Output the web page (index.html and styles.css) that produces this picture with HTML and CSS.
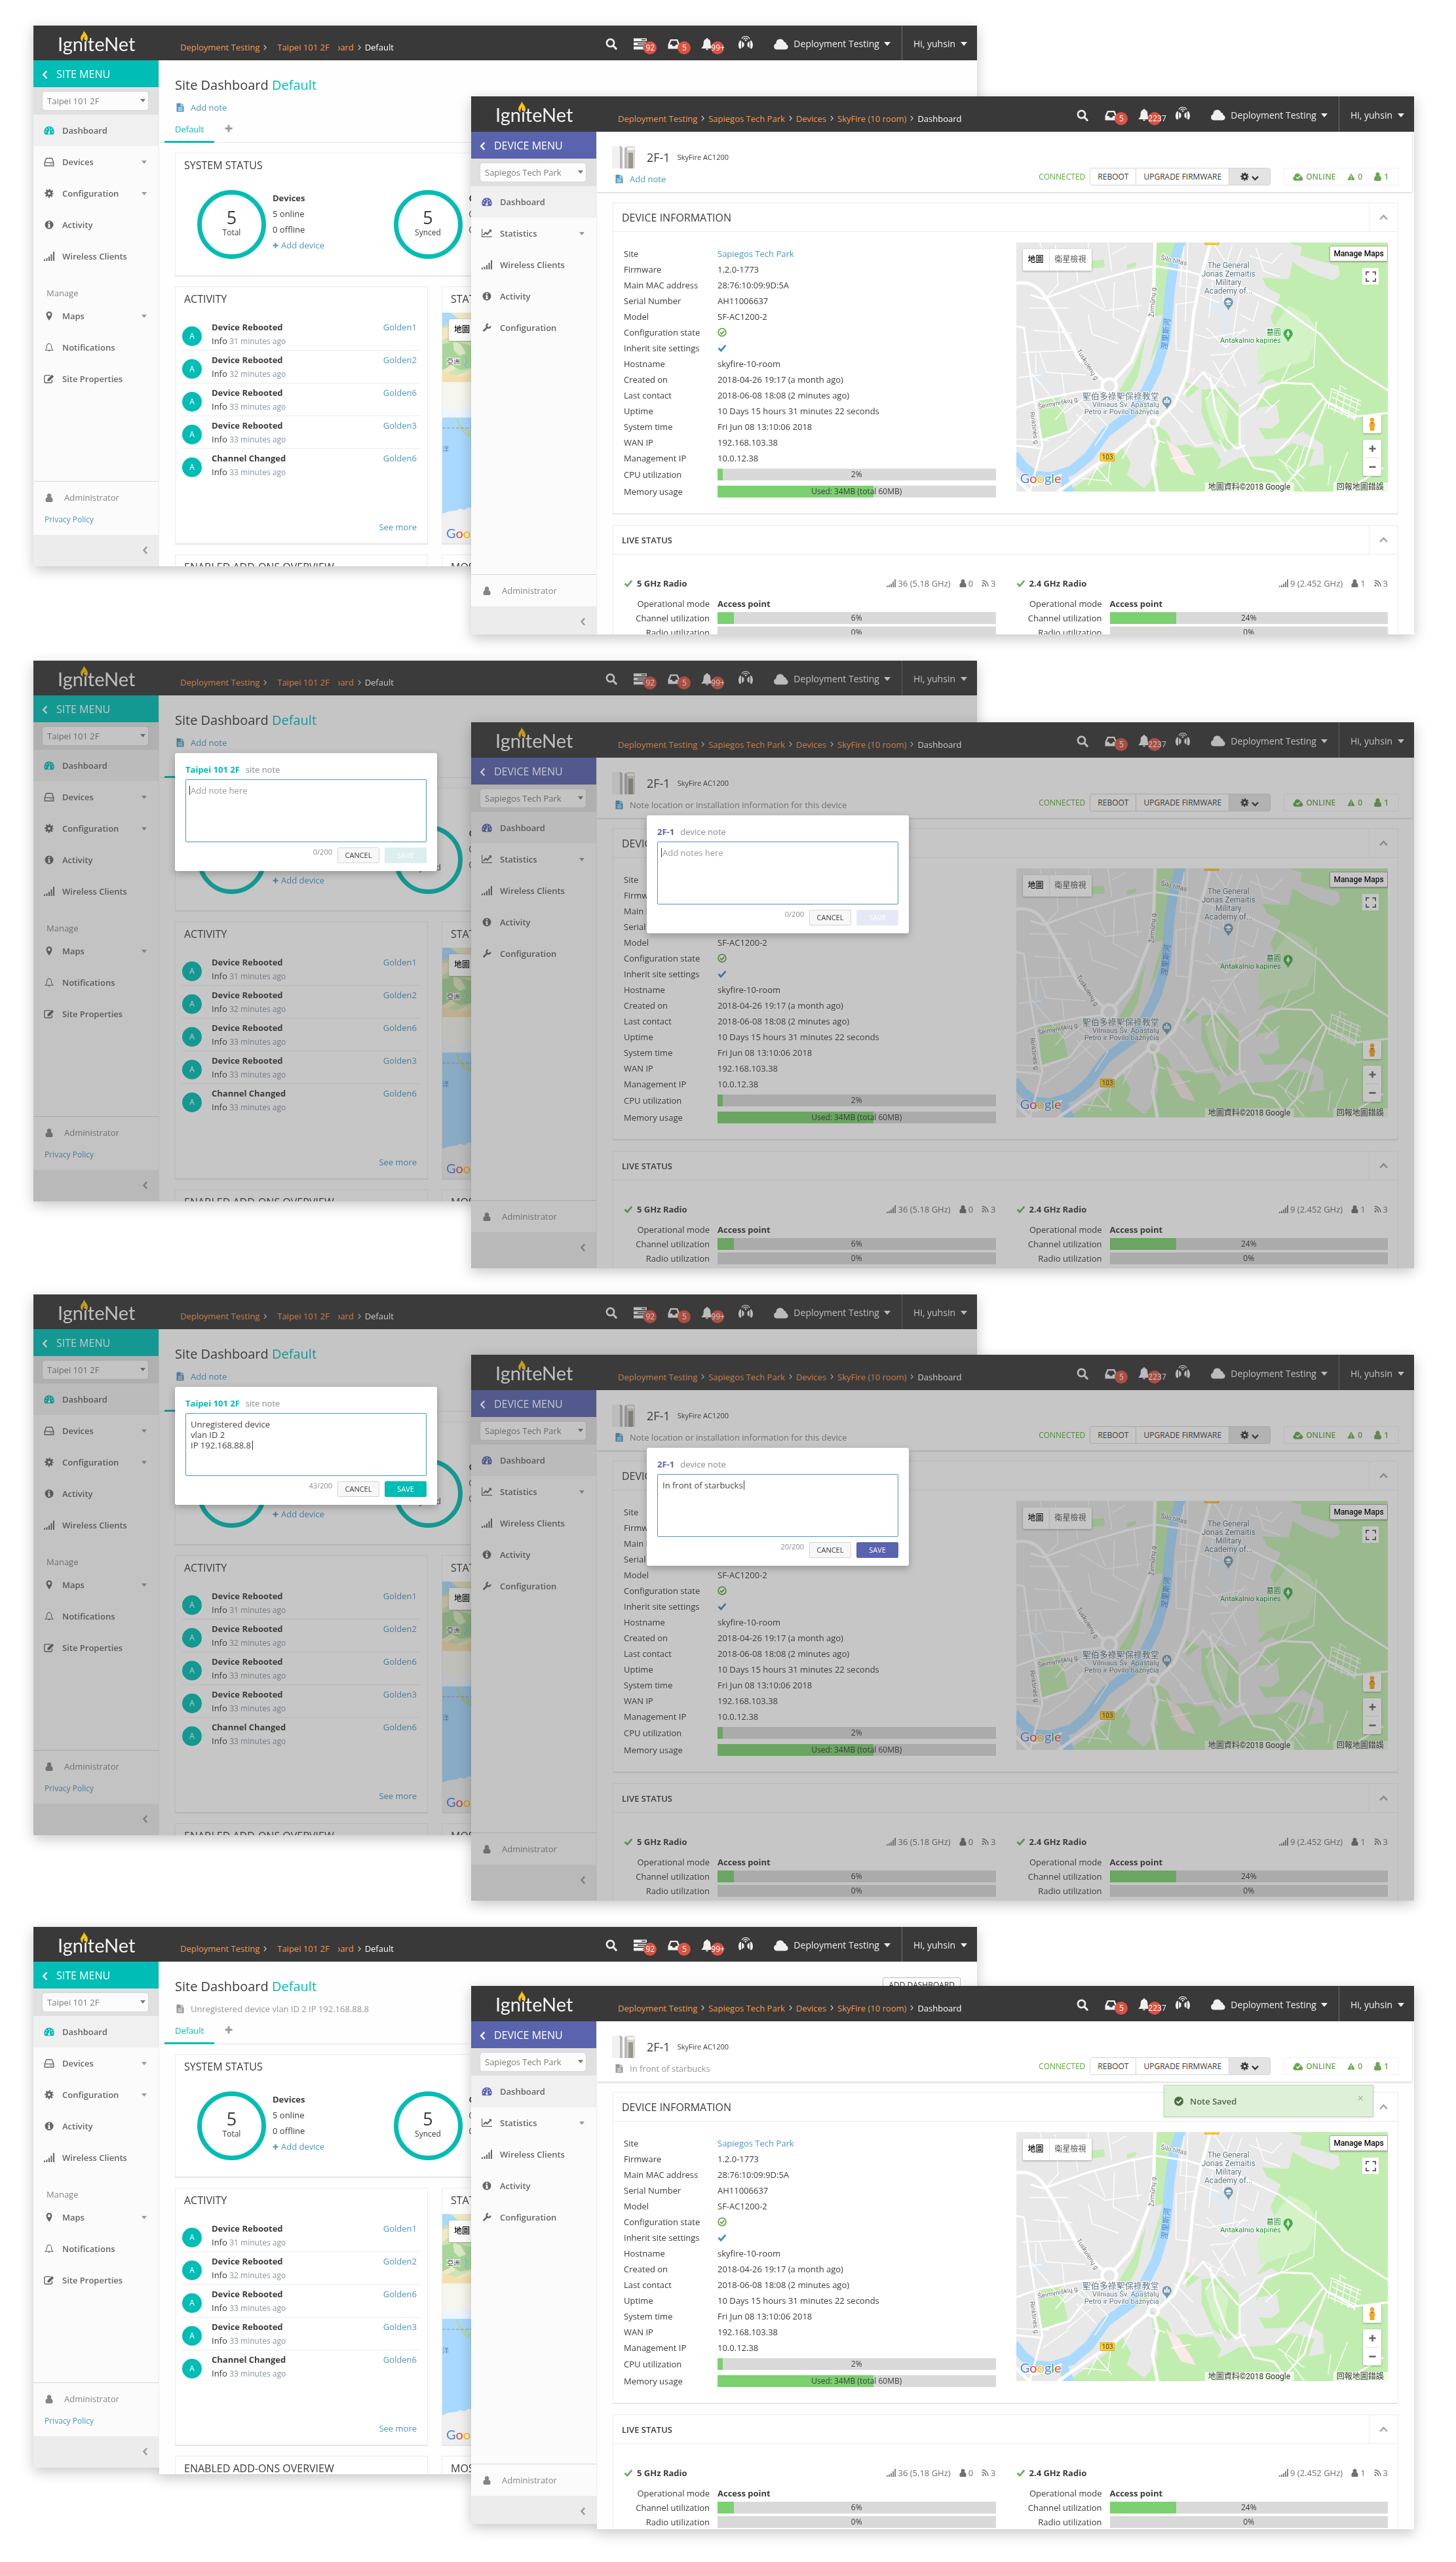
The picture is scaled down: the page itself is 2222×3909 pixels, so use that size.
FILE: index.html
```html
<!DOCTYPE html>
<html lang="en">
<head>
<meta charset="utf-8">
<meta name="viewport" content="width=device-width, initial-scale=1">
<title>IgniteNet – site and device notes</title>
<link rel="stylesheet" href="styles.css">
</head>
<body>

<svg class="sprite" aria-hidden="true">
  <symbol id="i-search" viewBox="0 0 18 18"><circle cx="7.5" cy="7.5" r="5.6" fill="none" stroke="currentColor" stroke-width="2.6"/><path d="M11.8 11.8l4.4 4.6" stroke="currentColor" stroke-width="3" stroke-linecap="round"/></symbol>
  <symbol id="i-tasks" viewBox="0 0 20 18"><path fill="currentColor" fill-rule="evenodd" d="M0 .5h20v4.500H0zM12 2v1.500h6.500V2zM0 6.700h20v4.500H0zM6 8.200v1.500h12.500V8.200zM0 13h20v4.500H0zM14 14.500v1.500h4.500v-1.500z"/></symbol>
  <symbol id="i-inbox" viewBox="0 0 19 16"><path fill="currentColor" fill-rule="evenodd" d="M4 1h11l3.500 8v6.500H.5V9zM5.500 3.200L3.200 9h3.300l1.200 2.600h3.600L12.500 9h3.300l-2.300-5.800z"/></symbol>
  <symbol id="i-bell" viewBox="0 0 18 19"><path fill="currentColor" d="M9 0c.8 0 1.300.6 1.300 1.400 2.700.6 4 3 4 5.600 0 4.500 1 6.300 3 8v1H.7v-1c2-1.700 3-3.500 3-8 0-2.600 1.300-5 4-5.600C7.700.6 8.200 0 9 0zM7 16.500h4a2 2 0 0 1-4 0z"/></symbol>
  <symbol id="i-antenna" viewBox="0 0 24 20"><g fill="currentColor"><path d="M4 6.500C.2 9.500.2 16.500 3 19.500l2-.7V7zM6.200 7.800l3.300 3v4.400l-3.300 3zM20 6.500c3.800 3 3.800 10 1 13l-2-.7V7zM17.800 7.800l-3.300 3v4.400l3.300 3z"/><circle cx="12" cy="6.500" r="1.200"/></g><path d="M8.800 5.300a3.500 3.500 0 0 1 6.400 0M6 4.300a6.600 6.600 0 0 1 12 0" fill="none" stroke="currentColor" stroke-width="1.300"/></symbol>
  <symbol id="i-cloud" viewBox="0 0 22 17"><path fill="currentColor" d="M5 16.500a4.600 4.600 0 0 1-1.600-9C3.200 3.600 5.800.6 9.600.6c3 0 5.200 1.700 5.900 4.300 2.200-.1 3.500 1.500 3.100 3.600 1.900.5 3 2 3 3.900 0 2.400-1.800 4.100-4.300 4.100z"/></symbol>
  <symbol id="i-cloudcheck" viewBox="0 0 22 17"><path fill="currentColor" fill-rule="evenodd" d="M5 16.500a4.600 4.600 0 0 1-1.600-9C3.200 3.600 5.800.6 9.600.6c3 0 5.200 1.700 5.900 4.300 2.200-.1 3.500 1.500 3.100 3.600 1.900.5 3 2 3 3.900 0 2.400-1.800 4.100-4.300 4.100zM6.400 9.600l3.700 3.700 6-6.200-1.500-1.400-4.500 4.700-2.200-2.200z"/></symbol>
  <symbol id="i-gauge" viewBox="0 0 16 14"><path fill="currentColor" d="M8 .8a7.700 7.700 0 0 0-7.700 7.700c0 1.800.5 3.300 1.300 4.700h12.800c.8-1.400 1.300-2.900 1.300-4.700A7.700 7.700 0 0 0 8 .8z"/><g fill="#f0f0f0"><circle cx="2.800" cy="9" r="1"/><circle cx="4.300" cy="5.200" r="1"/><circle cx="8" cy="3.300" r="1"/><circle cx="11.700" cy="5.200" r="1"/><circle cx="13.200" cy="9" r="1"/><path d="M8.600 4.800l.9.200-.7 4.300a1.700 1.700 0 1 1-1.300-.2z"/></g></symbol>
  <symbol id="i-disk" viewBox="0 0 14 12"><path d="M1 7l2.200-5.800h7.600L13 7v4.300H1zM1 7h12" fill="none" stroke="currentColor" stroke-width="1.200" stroke-linejoin="round"/><path d="M8 9h1.200M10.300 9h1.200" stroke="currentColor" stroke-width="1.200"/></symbol>
  <symbol id="i-gear" viewBox="0 0 16 16"><circle cx="8" cy="8" r="6.500" fill="none" stroke="currentColor" stroke-width="2.600" stroke-dasharray="2.700 2.405" stroke-dashoffset="1.350"/><circle cx="8" cy="8" r="4" fill="none" stroke="currentColor" stroke-width="3.400"/></symbol>
  <symbol id="i-info" viewBox="0 0 14 14"><circle cx="7" cy="7" r="6.500" fill="currentColor"/><path fill="#fbfbfb" d="M5.800 2.300h2.400v1.900H5.800zM5 5.500h3.200v4.300H9v1.500H5V9.800h.8V7H5z"/></symbol>
  <symbol id="i-signal" viewBox="0 0 16 14"><path fill="currentColor" d="M0 11.500h2V14H0zM3.500 10h2v4h-2zM7 7.500h2V14H7zM10.500 4h2v10h-2zM14 0h2v14h-2z"/></symbol>
  <symbol id="i-pin" viewBox="0 0 10 14"><path fill="currentColor" fill-rule="evenodd" d="M5 .3a4.500 4.500 0 0 1 4.500 4.500C9.500 7 7 11.500 5 13.900 3 11.500.5 7 .5 4.800A4.500 4.500 0 0 1 5 .3zM5 2.600a2.200 2.200 0 1 0 0 4.400 2.200 2.200 0 0 0 0-4.400z"/></symbol>
  <symbol id="i-bell-o" viewBox="0 0 16 16"><path d="M8 1.800c-2.600 0-3.900 2-3.900 4.500 0 3.400-.8 5-2.600 6.500h13c-1.800-1.500-2.600-3.100-2.600-6.500 0-2.500-1.300-4.500-3.900-4.500zM8 .3v1.500M6.500 13.200c.2 1.500 2.800 1.500 3 0" fill="none" stroke="currentColor" stroke-width="1.200"/></symbol>
  <symbol id="i-edit" viewBox="0 0 16 14"><path d="M10 1.600H3A2.200 2.200 0 0 0 .8 3.800v7A2.200 2.200 0 0 0 3 13h7.200a2.200 2.200 0 0 0 2.200-2.200V8.500" fill="none" stroke="currentColor" stroke-width="1.400"/><path fill="currentColor" d="M5.500 7.500L12.300.8l2.900 2.800-6.900 6.800H5.500z"/></symbol>
  <symbol id="i-user" viewBox="0 0 12 14"><path fill="currentColor" d="M6 0a3.400 3.400 0 0 1 2.600 5.700c2.300.6 3.400 2.500 3.400 5.600 0 1.600-.9 2.700-2.300 2.700H2.300C.9 14 0 12.900 0 11.300c0-3.100 1.100-5 3.400-5.600A3.400 3.400 0 0 1 6 0z"/></symbol>
  <symbol id="i-chart" viewBox="0 0 17 14"><path d="M.7 0v12.600H17" fill="none" stroke="currentColor" stroke-width="1.300"/><path d="M3 9.800l3.600-4 2.700 2.500 4.500-5.200" fill="none" stroke="currentColor" stroke-width="2.200"/><path fill="currentColor" d="M11.300 1H16v4.800z"/></symbol>
  <symbol id="i-wrench" viewBox="0 0 16 16"><path d="M2.800 13.200L9 7" stroke="currentColor" stroke-width="3.200" stroke-linecap="round"/><path d="M14.300 5.200a3.500 3.500 0 1 1-3.900-3.700" fill="none" stroke="currentColor" stroke-width="2.600"/></symbol>
  <symbol id="i-file" viewBox="0 0 12 14"><path fill="currentColor" fill-rule="evenodd" d="M.5.5h6.300v4.300h4.700v8.700H.5zM2.600 6.600v1h6.800v-1zM2.600 8.700v1h6.800v-1zM2.600 10.800v1h6.800v-1z"/><path fill="currentColor" d="M7.900.5l3.600 3.300H7.900z"/></symbol>
  <symbol id="i-check" viewBox="0 0 14 12"><path d="M1.500 6.200l3.800 3.900 7-8.300" fill="none" stroke="currentColor" stroke-width="2.800"/></symbol>
  <symbol id="i-check-o" viewBox="0 0 14 14"><circle cx="7" cy="7" r="5.900" fill="none" stroke="currentColor" stroke-width="1.700"/><path d="M4 6.800l2.400 2.500 3.900-4.500" fill="none" stroke="currentColor" stroke-width="1.900"/></symbol>
  <symbol id="i-check-disc" viewBox="0 0 14 14"><circle cx="7" cy="7" r="7" fill="currentColor"/><path d="M3.500 7l2.700 2.700 4.500-5" fill="none" stroke="#dff0d8" stroke-width="2"/></symbol>
  <symbol id="i-rss" viewBox="0 0 12 12"><circle cx="2.200" cy="9.800" r="1.500" fill="currentColor"/><path d="M.8 4.800a6.400 6.400 0 0 1 6.400 6.400M.8 1a10.200 10.200 0 0 1 10.200 10.200" fill="none" stroke="currentColor" stroke-width="1.600"/></symbol>
  <symbol id="i-warn" viewBox="0 0 14 13"><path fill="currentColor" fill-rule="evenodd" d="M7 .3L13.800 12.700H.2zM6.200 4.500l.3 4.200h1l.3-4.200zM6.200 9.600v1.500h1.600V9.600z"/></symbol>
  <symbol id="i-left" viewBox="0 0 9 14"><path d="M7.300 1.500L2.300 7l5 5.500" fill="none" stroke="currentColor" stroke-width="2.600"/></symbol>
  <symbol id="i-up" viewBox="0 0 13 9"><path d="M1.200 7.600L6.500 2l5.300 5.600" fill="none" stroke="currentColor" stroke-width="2.400"/></symbol>
  <symbol id="i-down" viewBox="0 0 11 8"><path d="M1 1.300l4.500 4.700L10 1.300" fill="none" stroke="currentColor" stroke-width="2.400"/></symbol>
  <symbol id="i-sep" viewBox="0 0 5 9"><path d="M.8.800l3.400 3.700L.8 8.200" fill="none" stroke="#c9c9c9" stroke-width="1.200"/></symbol>
  <symbol id="i-plus" viewBox="0 0 12 12"><path d="M6 .5v11M.5 6h11" stroke="currentColor" stroke-width="2.800"/></symbol>
  <symbol id="i-flame" viewBox="0 0 14 22"><path fill="#fdc500" fill-rule="evenodd" d="M6.500 0c.4 4 6.500 7.500 6.500 13.500 0 3.300-1.700 5.600-3.600 6.500.8-2.300.6-4.300-.6-6-.7-1-1.500-1.800-1.700-3.200-1.600 2.200-3.400 4.600-2.400 8.200C2.400 18 1 16 1 13.200 1 8.500 6.500 6 6.500 0z"/></symbol>
</svg>

<main class="board" id="board"></main>

<template id="site-window">
  <article class="window site">
    <header class="topbar">
      <a class="logo" href="#">IgniteNet<svg class="flame"><use href="#i-flame"/></svg></a>
      <nav class="crumbs" aria-label="Breadcrumb">
        <a href="#">Deployment Testing</a><svg><use href="#i-sep"/></svg>
        <a class="crumb-site" href="#">Taipei 101 2F</a>
        <a class="crumb-cut" href="#"><span>Dashboard</span></a><svg><use href="#i-sep"/></svg>
        <span class="here">Default</span>
      </nav>
      <div class="tools">
        <button class="tool find" aria-label="Search"><svg><use href="#i-search"/></svg></button>
        <button class="tool tasks" aria-label="Tasks"><svg><use href="#i-tasks"/></svg><b class="badge">92</b></button>
        <button class="tool inbox" aria-label="Inbox"><svg><use href="#i-inbox"/></svg><b class="badge">5</b></button>
        <button class="tool bell" aria-label="Alerts"><svg><use href="#i-bell"/></svg><b class="badge long">99+</b></button>
        <button class="tool antenna" aria-label="Wireless"><svg><use href="#i-antenna"/></svg></button>
        <button class="tool cloud"><svg><use href="#i-cloud"/></svg>Deployment Testing<i class="caret"></i></button>
        <button class="tool me">Hi, yuhsin<i class="caret"></i></button>
      </div>
    </header>

    <aside class="side">
      <a class="menu-title" href="#"><svg><use href="#i-left"/></svg>SITE MENU</a>
      <div class="picker"><select aria-label="Site"><option>Taipei 101 2F</option></select><i class="caret"></i></div>
      <nav class="menu" aria-label="Site menu">
        <a class="on" href="#"><svg><use href="#i-gauge"/></svg>Dashboard</a>
        <a href="#"><svg><use href="#i-disk"/></svg>Devices<i class="caret"></i></a>
        <a href="#"><svg><use href="#i-gear"/></svg>Configuration<i class="caret"></i></a>
        <a href="#"><svg><use href="#i-info"/></svg>Activity</a>
        <a href="#"><svg><use href="#i-signal"/></svg>Wireless Clients</a>
        <h2>Manage</h2>
        <a href="#"><svg><use href="#i-pin"/></svg>Maps<i class="caret"></i></a>
        <a href="#"><svg><use href="#i-bell-o"/></svg>Notifications</a>
        <a href="#"><svg><use href="#i-edit"/></svg>Site Properties</a>
      </nav>
      <div class="account">
        <a class="admin" href="#"><svg><use href="#i-user"/></svg>Administrator</a>
        <a class="privacy" href="#">Privacy Policy</a>
      </div>
      <button class="fold" aria-label="Collapse menu"><svg><use href="#i-left"/></svg></button>
    </aside>

    <div class="content">
      <div class="head">
        <div class="headline"><h1>Site Dashboard <em>Default</em></h1></div>
        <a class="note" href="#"><svg><use href="#i-file"/></svg><span data-slot="siteNote"></span></a>
        <div class="tabs"><a class="on" href="#">Default</a><button aria-label="Add tab"><svg><use href="#i-plus"/></svg></button></div>
      </div>
      <section class="card status">
        <h2>SYSTEM STATUS</h2>
        <div class="rings">
          <div class="ringbox">
            <div class="ring"><b>5</b>Total</div>
            <div class="lines"><strong>Devices</strong><span>5 online</span><span>0 offline</span><a href="#"><svg><use href="#i-plus"/></svg>Add device</a></div>
          </div>
          <div class="ringbox">
            <div class="ring"><b>5</b>Synced</div>
            <div class="lines"><strong>Configuration</strong><span>0</span><span>0</span></div>
          </div>
        </div>
      </section>
      <div class="cards">
        <section class="card activity">
          <h2>ACTIVITY</h2>
          <ul>
            <li><i>A</i><div><strong>Device Rebooted</strong><span>Info <small>31 minutes ago</small></span></div><a href="#">Golden1</a></li>
            <li><i>A</i><div><strong>Device Rebooted</strong><span>Info <small>32 minutes ago</small></span></div><a href="#">Golden2</a></li>
            <li><i>A</i><div><strong>Device Rebooted</strong><span>Info <small>33 minutes ago</small></span></div><a href="#">Golden6</a></li>
            <li><i>A</i><div><strong>Device Rebooted</strong><span>Info <small>33 minutes ago</small></span></div><a href="#">Golden3</a></li>
            <li><i>A</i><div><strong>Channel Changed</strong><span>Info <small>33 minutes ago</small></span></div><a href="#">Golden6</a></li>
          </ul>
          <a class="more" href="#">See more</a>
        </section>
        <section class="card wide">
          <h2>STATUS</h2>
          <div class="worldmap">
            <svg width="100%" height="352" preserveAspectRatio="xMinYMin">
              <path fill="#a9d9fe" d="M0 0h2000v352H0z"/>
              <path fill="#cfe3b4" d="M0 22l10-8 12-6 14-6h1964v98H0z"/>
              <path fill="#efe9c4" d="M12 0h34v10L24 9zM0 24l10-2 6 12-16 8zM0 60l14 10 6 16-20 10zM0 94l18 4 26-12v22H0z"/>
              <path fill="#a8d59a" d="M0 48l20-4 24 6v34l-16 4-14-8-14 8z"/>
              <path fill="#dbe9c2" d="M16 42l12 6 8 14-10 4-8-8z"/>
              <path fill="#f3dfb0" d="M0 90l14 4 12 4 18-4v12H0z"/>
              <path fill="#f6f6ee" d="M0 106h2000v54H0z"/>
              <path fill="#eef5fc" d="M0 140l10 8 14 2 12-10 8 6v14H0z"/>
              <path d="M22 162l4 10 8 12 12 6M28 176l10 4 8 8" fill="none" stroke="#b4d9a4" stroke-width="3"/>
              <path d="M0 176h2000" stroke="#a98ea8" stroke-width="1" stroke-dasharray="5 2"/>
              <path fill="#f0f0f0" d="M0 307l10-4 12-1 4-3 8 2 6-4 10 2 1950 3v52H0z"/>
              <path d="M34 66l4 8-4 6 4 4" fill="none" stroke="#6fb5e8"/>
              <g font-family="Noto Sans CJK TC, sans-serif" font-size="10"><text x="7" y="78" fill="#333" stroke="#fff" stroke-width="2" paint-order="stroke">亞洲</text><text x="0" y="212" fill="#4b87d2">洋</text></g>
              <text class="google" x="6" y="344"><tspan fill="#4285f4">G</tspan><tspan fill="#ea4335">o</tspan><tspan fill="#fbbc05">o</tspan><tspan fill="#4285f4">g</tspan><tspan fill="#34a853">l</tspan><tspan fill="#ea4335">e</tspan></text>
            </svg>
            <div class="maptype"><button class="on">地圖</button></div>
          </div>
        </section>
        <section class="card"><h2>ENABLED ADD-ONS OVERVIEW</h2></section>
        <section class="card wide"><h2>MOST</h2></section>
      </div>
    </div>
  </article>
</template>

<template id="device-window">
  <article class="window device">
    <header class="topbar">
      <a class="logo" href="#">IgniteNet<svg class="flame"><use href="#i-flame"/></svg></a>
      <nav class="crumbs" aria-label="Breadcrumb">
        <a href="#">Deployment Testing</a><svg><use href="#i-sep"/></svg>
        <a href="#">Sapiegos Tech Park</a><svg><use href="#i-sep"/></svg>
        <a href="#">Devices</a><svg><use href="#i-sep"/></svg>
        <a href="#">SkyFire (10 room)</a><svg><use href="#i-sep"/></svg>
        <span class="here">Dashboard</span>
      </nav>
      <div class="tools">
        <button class="tool find" aria-label="Search"><svg><use href="#i-search"/></svg></button>
        <button class="tool inbox" aria-label="Inbox"><svg><use href="#i-inbox"/></svg><b class="badge">5</b></button>
        <button class="tool bell" aria-label="Alerts"><svg><use href="#i-bell"/></svg><b class="badge long">2237</b></button>
        <button class="tool antenna" aria-label="Wireless"><svg><use href="#i-antenna"/></svg></button>
        <button class="tool cloud"><svg><use href="#i-cloud"/></svg>Deployment Testing<i class="caret"></i></button>
        <button class="tool me">Hi, yuhsin<i class="caret"></i></button>
      </div>
    </header>

    <aside class="side">
      <a class="menu-title" href="#"><svg><use href="#i-left"/></svg>DEVICE MENU</a>
      <div class="picker"><select aria-label="Site"><option>Sapiegos Tech Park</option></select><i class="caret"></i></div>
      <nav class="menu" aria-label="Device menu">
        <a class="on" href="#"><svg><use href="#i-gauge"/></svg>Dashboard</a>
        <a href="#"><svg><use href="#i-chart"/></svg>Statistics<i class="caret"></i></a>
        <a href="#"><svg><use href="#i-signal"/></svg>Wireless Clients</a>
        <a href="#"><svg><use href="#i-info"/></svg>Activity</a>
        <a href="#"><svg><use href="#i-wrench"/></svg>Configuration</a>
      </nav>
      <div class="account">
        <a class="admin" href="#"><svg><use href="#i-user"/></svg>Administrator</a>
      </div>
      <button class="fold" aria-label="Collapse menu"><svg><use href="#i-left"/></svg></button>
    </aside>

    <div class="content">
      <div class="head">
        <div class="who">
          <div class="headline">
            <svg class="product" viewBox="0 0 35 34"><path fill="#f1f1f1" d="M0 3q0-3 4-3h8q4 0 4 4v30H0z"/><path fill="#b9b9b9" d="M11 0h1q4 0 4 4v30h-4V4q0-3-1-4zM19 4q0-3 4-3h2v33h-6z"/><path fill="#d8d5d0" d="M23 1q0-1 2-1h7q3 0 3 4v30H23z"/><path fill="#9a9790" d="M25 10h7v24h-7z"/><path fill="#f4f4f4" d="M23 2h11v4H23z"/></svg>
            <h1>2F-1</h1><small>SkyFire AC1200</small>
          </div>
          <a class="note" href="#"><svg><use href="#i-file"/></svg><span data-slot="deviceNote"></span></a>
        </div>
        <div class="actions">
          <span class="connected">CONNECTED</span>
          <div class="group"><button>REBOOT</button><button>UPGRADE FIRMWARE</button><button class="cog" aria-label="More actions"><svg><use href="#i-gear"/></svg><svg class="down"><use href="#i-down"/></svg></button></div>
          <div class="health"><span class="online"><svg><use href="#i-cloudcheck"/></svg>ONLINE</span><span><svg class="s-warn"><use href="#i-warn"/></svg>0</span><span><svg class="s-user"><use href="#i-user"/></svg>1</span></div>
        </div>
      </div>

      <section class="card panel">
        <header><h2>DEVICE INFORMATION</h2><button aria-label="Collapse"><svg><use href="#i-up"/></svg></button></header>
        <div class="halves info">
          <table>
            <tr><th scope="row">Site</th><td><a href="#">Sapiegos Tech Park</a></td></tr>
            <tr><th scope="row">Firmware</th><td>1.2.0-1773</td></tr>
            <tr><th scope="row">Main MAC address</th><td>28:76:10:09:9D:5A</td></tr>
            <tr><th scope="row">Serial Number</th><td>AH11006637</td></tr>
            <tr><th scope="row">Model</th><td>SF-AC1200-2</td></tr>
            <tr><th scope="row">Configuration state</th><td><svg class="ok"><use href="#i-check-o"/></svg></td></tr>
            <tr><th scope="row">Inherit site settings</th><td><svg class="yes"><use href="#i-check"/></svg></td></tr>
            <tr><th scope="row">Hostname</th><td>skyfire-10-room</td></tr>
            <tr><th scope="row">Created on</th><td>2018-04-26 19:17 (a month ago)</td></tr>
            <tr><th scope="row">Last contact</th><td>2018-06-08 18:08 (2 minutes ago)</td></tr>
            <tr><th scope="row">Uptime</th><td>10 Days 15 hours 31 minutes 22 seconds</td></tr>
            <tr><th scope="row">System time</th><td>Fri Jun 08 13:10:06 2018</td></tr>
            <tr><th scope="row">WAN IP</th><td>192.168.103.38</td></tr>
            <tr><th scope="row">Management IP</th><td>10.0.12.38</td></tr>
            <tr class="tall"><th scope="row">CPU utilization</th><td><div class="bar"><i style="width:2%"></i><span>2%</span></div></td></tr>
            <tr class="tall"><th scope="row">Memory usage</th><td><div class="bar"><i style="width:56%"></i><span>Used: 34MB (total 60MB)</span></div></td></tr>
          </table>
          <div class="citymap">
            <svg width="100%" height="380" viewBox="0 0 568 380" preserveAspectRatio="xMidYMid slice">
              <path fill="#e8e8e8" d="M0 0h568v380H0z"/>
              <g fill="#c2edb0">
                <path d="M464 0h104v380H80l60-44 22-23 13 24-6 18 26 20 10-11 9-30-9-62 26 18 8 20 22-2 14 6 26-2 12 20-6 14 34-18 52-3 28-19 34 10-9 26 24-4-2-30-30-20-20 10-38 2-14-24 2-60 24-30 36-20-28-22-12-30 16-34-22-12-6-14 40 2 6-26 26 16 36 12 10-8-2-14-44-12-14-4 2-14-16-4-12-12 26-2 30-2 12-10z"/>
                <path d="M213 0h36l-14 36-6 74-14 50-32 66-28 4 24-40 28-70 6-60zM283 225l30-4 26 26 2 56-16 14-25-16-17-40zM35 241l33-5 11 52-42 13zM114 28l20-2 1 12-21 2zM169 34l14-4v6l-14 5zM258 212l22 10-20 16zM174 256l30-14-4 14-20 12z"/>
              </g>
              <g fill="#d3f2c6"><path d="M416 96l28 14 12 18-2 30-10 22-40 12-32 10-4-36 10-16 20-28zM288 236l22-2 14 20-8 50-16-20-10-34z"/></g>
              <g fill="#e8e8e8"><path d="M366 218l24-10 14 8-22 10-16 26 32-4 4 26-12 10-28-2-2-12 10-18-16 4zM204 114l20-4-10 34-16 60-28 60-8-14 24-46zM172 312l30 4 12-10 2 34-22 34-8-12 4-22-12 8z"/></g>
              <path fill="#fbe9e9" d="M228 300l20 14 20 30 6 12-22-6-10-16zM266 192l8-2-4 16z"/>
              <path fill="#e3eaef" d="M294 86l36 4-4 60-10 20-4-60-20-10zM20 200l22-2 2 18-22 2z"/>
              <path d="M252-4l-11 34-7 46-3 40-3 30-14 48-18 36-21 32-38 28-26 36-26 22-32 10-24-2-18-14-14-18M68 352l14 30" fill="none" stroke="#aadaff" stroke-width="15" stroke-linejoin="round"/>
              <g fill="none" stroke="#fff" stroke-width="1.400">
                <path d="M36 0l10 30 20 10M60 4l4 60-20 22M90 20l4 40M110 0v24M140 0l6 44M168 6l-22 12M180 44l6 60M20 100h60M26 134l60 4M10 168l80-4M64 118l4 48M96 80l40 24 56-8M110 110l6 30 40 14M120 60l16 40M150 60l-2 54 40 22M80 138l16 36M36 168l10 30 60 4M70 200l4 36M24 200l50 60 40-30M60 270l26-32 30 28M78 300l36-30M40 330l40-28M100 240l40 40-20 30M92 262l30 30M0 300l50 2M4 206l34-4M30 170v30M256 6l-6 60 30 4M262 0l-4 120M276 90l-32 4v70l20 2M300 0l20 30-4 60M330 4l-20 60M320 40l22 10M345 8l-22 60M356 20l34 12 16-16M366 8l12 36 24 8M300 60l-6 56M280 80l30 12M340 80l-10 70M370 90l-8 30-20-10M272 140l22 6 60-12M290 130l30 30 30-30M296 172l30-2 30-20M310 200l30-40M300 180l24 40M284 196l50 26M330 170l20 50M290 240l26-40M240 230l30 30M226 250l36 40M250 280l24 30 26-4M236 330l30-6M178 300l-16 30M130 330l-20 40M120 340l26 30M100 360l40 4 4-30M210 300l18 6M310 300l10 20M380 260l22-20M440 310l-14 46M400 330l40 30M480 340l-4 30M506 320l-20 50M340 250l30-20 20 20"/>
                <path d="M480 222l46 20M484 228l42 20M482 236l42 20M478 244l42 20M478 252l40 18M482 222l-6 32M492 226l-6 34M502 230l-6 34M512 234l-6 34M522 238l-6 34"/>
                <path d="M504 224l-10-6v10M440 380l-30-40 20-30M458 120l-4 70-48 24M404 214l14-30"/>
              </g>
              <g fill="none" stroke="#fff" stroke-width="3" stroke-linejoin="round">
                <path d="M22 80l20 6 60-22 70-20 40-8 50 8M0 252l34-12 60-12 40-4M0 128l12 2 8 60 10 60 10 60-12 44-8 30M0 310l40 4M38 302l44-14 20-26M255 232l30-34 40 50 14 16M296 205l8 50 18 46 14 14 14-6M341 266v40l22 38 30 6 20 26M341 266l26-20 14-24 24-8 46 2 24 28 40 22 53-6M468 238l-52 64-20 20M474 242l-20 50-14 46-36 40M262 44l80 24 60 28 30 22 32 22 36 42 36 24 32 20M0 362l30 8 40-16M500 380l60-36"/>
              </g>
              <g fill="none" stroke="#fff" stroke-width="5">
                <path d="M0 62c30-4 40 12 56 40l40 76 36 32M212-2l-2 66-6 46-28 72-26 28M297-2l-16 60-10 50-6 60-4 34-20 46-24 22M200 278l-52 44-84 58M210 280l6 24-8 36 8 42M0 360l24 24"/>
                <circle cx="142" cy="219" r="11"/><circle cx="209" cy="273" r="8"/>
              </g>
              <g stroke="#e2a400" fill="#fbd13a"><path d="M288-8h21V3h-21zM128.500 321.500h21v12h-21z"/></g>
              <g class="street">
                <text x="220" y="26" transform="rotate(13 220 26)">Šilo tiltas</text>
                <text x="210" y="114" transform="rotate(-86 210 114)">Žirmūnų g.</text>
                <text x="92" y="165" transform="rotate(58 92 165)">Tuskulėnų g.</text>
                <text x="34" y="254" transform="rotate(-11 34 254)">Šeimyniškių g.</text>
                <text x="21" y="259" transform="rotate(82 21 259)">Rinktinės g.</text>
              </g>
              <text class="shield" x="131" y="331">103</text>
              <text class="river" x="230" y="164" transform="rotate(-84 230 164)">涅里斯河</text>
              <g class="place" text-anchor="middle"><text x="324" y="39">The General</text><text x="324" y="52">Jonas Zemaitis</text><text x="324" y="65">Military</text><text x="324" y="78">Academy of...</text></g>
              <g class="place" text-anchor="end"><text class="zh" x="218" y="239">聖伯多祿聖保祿教堂</text><text x="218" y="251">Vilniaus Šv. Apaštalų</text><text x="218" y="262">Petro ir Povilo bažnyčia</text></g>
              <g class="place grave" text-anchor="end"><text x="404" y="141">墓園</text><text x="404" y="153">Antakalnio kapinės</text></g>
              <g fill="#7398ac"><path d="M324 104c-1-5-7-8-7-13a7 7 0 0 1 14 0c0 5-6 8-7 13zM230 255c-1-5-7-8-7-13a7 7 0 0 1 14 0c0 5-6 8-7 13z"/></g>
              <path fill="#3fae4c" d="M415 152c-1-5-7-8-7-13a7 7 0 0 1 14 0c0 5-6 8-7 13z"/>
              <path fill="#fff" d="M319 90l5-2.500 5 2.500-5 2.500zM321 92.500l3 1.500 3-1.500v2.500h-6zM226 245v-5h2v5zM229 245v-8h2v8zM232 245v-5h2v5zM415 134l3 7h-6zM414 141h2v3h-2z"/>
              <path fill="#fff" fill-opacity=".7" d="M288 366h136v14H288zM484 366h84v14h-84z"/>
              <g class="credit"><text x="293" y="377">地圖資料©2018 Google</text><text x="561" y="377" text-anchor="end">回報地圖錯誤</text></g>
              <text class="google halo" x="6" y="367"><tspan fill="#4285f4">G</tspan><tspan fill="#ea4335">o</tspan><tspan fill="#fbbc05">o</tspan><tspan fill="#4285f4">g</tspan><tspan fill="#34a853">l</tspan><tspan fill="#ea4335">e</tspan></text>
            </svg>
            <div class="maptype"><button class="on">地圖</button><button>衛星檢視</button></div>
            <div class="mapright">
              <button class="manage">Manage Maps</button>
              <button class="full" aria-label="Full screen"><svg viewBox="0 0 16 16"><path d="M1 5.500V1h4.500M10.500 1H15v4.500M15 10.500V15h-4.500M5.500 15H1v-4.500" fill="none" stroke="#666" stroke-width="2"/></svg></button>
              <button class="pegman" aria-label="Street view"><svg viewBox="0 0 12 20"><circle cx="6" cy="3.500" r="3.300" fill="#f4a81d"/><path fill="#f4a81d" d="M3 7h6l2 6-1.500.6V20H2.500v-6.400L1 13z"/><path fill="#d9552b" d="M4 7l2 3 2-3z"/></svg></button>
              <div class="zoom"><button aria-label="Zoom in"><svg><use href="#i-plus"/></svg></button><button aria-label="Zoom out"><svg viewBox="0 0 12 12"><path d="M.5 6h11" stroke="currentColor" stroke-width="2.800"/></svg></button></div>
            </div>
          </div>
        </div>
      </section>

      <section class="card panel live">
        <header><h2>LIVE STATUS</h2><button aria-label="Collapse"><svg><use href="#i-up"/></svg></button></header>
        <div class="halves">
          <div class="radio">
            <div class="radio-head"><h3><svg><use href="#i-check"/></svg>5 GHz Radio</h3><span><svg><use href="#i-signal"/></svg>36 (5.18 GHz)</span><span><svg><use href="#i-user"/></svg>0</span><span><svg><use href="#i-rss"/></svg>3</span></div>
            <table>
              <tr><th scope="row">Operational mode</th><td><b>Access point</b></td></tr>
              <tr><th scope="row">Channel utilization</th><td><div class="bar"><i style="width:6%"></i><span>6%</span></div></td></tr>
              <tr><th scope="row">Radio utilization</th><td><div class="bar"><span>0%</span></div></td></tr>
            </table>
          </div>
          <div class="radio">
            <div class="radio-head"><h3><svg><use href="#i-check"/></svg>2.4 GHz Radio</h3><span><svg><use href="#i-signal"/></svg>9 (2.452 GHz)</span><span><svg><use href="#i-user"/></svg>1</span><span><svg><use href="#i-rss"/></svg>3</span></div>
            <table>
              <tr><th scope="row">Operational mode</th><td><b>Access point</b></td></tr>
              <tr><th scope="row">Channel utilization</th><td><div class="bar"><i style="width:24%"></i><span>24%</span></div></td></tr>
              <tr><th scope="row">Radio utilization</th><td><div class="bar"><span>0%</span></div></td></tr>
            </table>
          </div>
        </div>
      </section>
    </div>
  </article>
</template>

<template id="note-dialog">
  <div class="shade">
    <form class="dialog" role="dialog" aria-label="Note">
      <h2><b data-slot="name"></b><span data-slot="kind"></span></h2>
      <textarea aria-label="Note text" spellcheck="false"></textarea>
      <div class="foot"><span data-slot="count"></span><button type="button" class="cancel">CANCEL</button><button type="button" class="save">SAVE</button></div>
    </form>
  </div>
</template>

<template id="toast">
  <div class="toast" role="status"><svg><use href="#i-check-disc"/></svg><strong>Note Saved</strong><button aria-label="Close">×</button></div>
</template>

<script src="app.js"></script>
</body>
</html>
```
FILE: app.js
```js
// Each step of the note flow: the site window behind, the device window in front.
const steps = [
  { siteNote: 'Add note', deviceNote: 'Add note' },
  {
    siteNote: 'Add note', deviceNote: 'Note location or installation information for this device', muted: 'device',
    site: { name: 'Taipei 101 2F', kind: 'site note', hint: 'Add note here', text: '', count: '0/200' },
    device: { name: '2F-1', kind: 'device note', hint: 'Add notes here', text: '', count: '0/200' }
  },
  {
    siteNote: 'Add note', deviceNote: 'Note location or installation information for this device', muted: 'device',
    site: { name: 'Taipei 101 2F', kind: 'site note', text: 'Unregistered device\nvlan ID 2\nIP 192.168.88.8', count: '43/200', caret: 'third' },
    device: { name: '2F-1', kind: 'device note', text: 'In front of starbucks', count: '20/200', caret: 'first' }
  },
  { siteNote: 'Unregistered device vlan ID 2 IP 192.168.88.8', deviceNote: 'In front of starbucks', saved: true }
];

const board = document.getElementById('board');
const clone = id => document.getElementById(id).content.firstElementChild.cloneNode(true);
const fill = (root, slot, text) => {
  const el = root.querySelector(`[data-slot="${slot}"]`);
  if (el) el.textContent = text;
};

function dialog(note) {
  const shade = clone('note-dialog');
  fill(shade, 'name', note.name);
  fill(shade, 'kind', note.kind);
  fill(shade, 'count', note.count);
  const box = shade.querySelector('textarea');
  box.value = note.text;
  box.placeholder = note.hint || '';
  if (note.caret) box.classList.add('caret-' + note.caret);
  shade.querySelector('.save').disabled = !note.text;
  return shade;
}

steps.forEach((step, i) => {
  const scene = document.createElement('section');
  scene.className = `scene step-${i + 1}`;
  for (const kind of ['site', 'device']) {
    const win = clone(kind + '-window');
    fill(win, kind + 'Note', step[kind + 'Note']);
    const note = win.querySelector('.note');
    if (step.saved) note.classList.add('saved');
    if (step.muted === kind) note.classList.add('muted');
    if (step[kind]) win.append(dialog(step[kind]));
    if (step.saved && kind === 'device') win.append(clone('toast'));
    if (step.saved && kind === 'site') {
      const add = document.createElement('button');
      add.className = 'add-dashboard';
      add.textContent = 'ADD DASHBOARD';
      win.querySelector('.headline').append(add);
    }
    scene.append(win);
  }
  board.append(scene);
});
```
FILE: styles.css
```css
* { box-sizing: border-box; }
body {
  margin: 0;
  background: #fff;
  color: #3b3b3b;
  font: 13px/20px "Open Sans", "Noto Sans CJK TC", sans-serif;
}
h1, h2, h3, ul { margin: 0; padding: 0; font-weight: 400; list-style: none; }
a { color: #4a98c4; text-decoration: none; }
button, select, textarea { font: inherit; color: inherit; margin: 0; }
button { background: none; border: 0; padding: 0; }
svg { display: block; flex: none; }
em, i { font-style: normal; }
.sprite { position: absolute; width: 0; height: 0; }

.board { display: grid; gap: 40px; padding: 39px 64px 50px 51px; }

/* two overlapping windows: back spans columns 1-2, front spans 2-3 */
.scene {
  --front-top: 92px;
  --site-h: 825px;
  --device-h: 833px;
  display: grid;
  grid-template-columns: 668fr 772fr 667fr;
  align-items: start;
}
.step-1 { --front-top: 108px; --device-h: 821px; }
.step-2 { --front-top: 94px; }
.step-4 { --front-top: 90px; --site-h: 835px; --device-h: 829px; }

.window {
  position: relative;
  grid-row: 1;
  display: grid;
  grid-template: var(--bar) calc(var(--h) - var(--bar)) / 192px minmax(0, 1fr);
  filter: drop-shadow(0 6px 10px rgba(0, 0, 0, .22));
}
.site { --h: var(--site-h); --bar: 53px; --accent: #00bdb5; --soft: #dceeed; grid-column: 1 / 3; }
.device { --h: var(--device-h); --bar: 54px; --accent: #5a63ae; --soft: #e6e9f5; grid-column: 2 / 4; margin-top: var(--front-top); }

/* top bar */
.topbar { grid-column: 1 / 3; display: flex; background: #393939; color: #f0f0f0; }
.logo {
  position: relative;
  width: 192px;
  padding-left: 37px;
  color: #f4f4f4;
  font: 29px/56px Lato, sans-serif;
}
.flame { position: absolute; left: 71px; top: 7px; width: 13px; height: 20px; }
.crumbs { display: flex; align-items: center; padding: 13px 0 0 32px; white-space: nowrap; }
.crumbs svg { width: 5px; height: 9px; margin: 0 6px; }
.crumbs a { color: #ef9850; }
.crumbs .here { color: #fff; }
.crumb-site { margin: 0 13px 0 10px; }
.crumb-cut { display: flex; justify-content: flex-end; width: 24px; overflow: hidden; }
.tools { display: flex; align-items: center; gap: 32px; margin-left: auto; }
.tool { position: relative; display: flex; align-items: center; height: 100%; padding-top: 3px; font-size: 14px; white-space: nowrap; }
.find { margin-right: -7px; }
.find svg { width: 18px; height: 18px; }
.tasks svg { width: 20px; height: 18px; }
.inbox svg { width: 19px; height: 16px; }
.bell svg { width: 18px; height: 19px; }
.bell { margin-right: 6px; }
.antenna { margin-right: -1px; }
.antenna svg { width: 24px; height: 20px; margin-bottom: 5px; }
.cloud svg { width: 22px; height: 17px; margin-right: 8px; }
.cloud .caret { margin-left: 7px; margin-right: 17px; }
.me { margin-left: -32px; padding-left: 17px; padding-right: 15px; border-left: 1px solid #6b6b6b; }
.me .caret { margin-left: 8px; }
.caret { border: 5px solid transparent; border-top: 6px solid currentColor; border-bottom: 0; }
.badge {
  position: absolute;
  left: 15px;
  top: 24px;
  width: 20px;
  height: 20px;
  border-radius: 50%;
  background: #d95343;
  color: #fff;
  font: 12px/20px "Open Sans", sans-serif;
  text-align: center;
}
.badge.long { text-align: left; }

/* side menu */
.side { display: flex; flex-direction: column; background: #fbfbfb; border-right: 1px solid #ececec; }
.step-4 .site .side { height: calc(100% - 10px); }
.step-4 .device .side { height: calc(100% - 8px); }
.menu-title { display: flex; align-items: center; height: 41px; padding-left: 13px; background: var(--accent); color: #fff; font-size: 16px; }
.menu-title svg { width: 9px; height: 14px; margin: 3px 13px 0 0; }
.picker { position: relative; height: 42px; padding: 6px 15px 6px 13px; background: #e0e0e0; }
.picker select { width: 100%; height: 30px; padding: 0 7px; appearance: none; background: #fcfcfc; border: 1px solid #d6d6d6; border-radius: 5px; color: #7d7d7d; }
.picker .caret { position: absolute; right: 20px; top: 18px; border-width: 5px 4px 0; color: #777; }
.menu { height: 560px; border-bottom: 1px solid #d5d5d5; }
.device .menu { height: 593px; }
.menu a { display: flex; align-items: center; height: 48px; padding: 0 18px 0 16px; color: #666; font-weight: 600; }
.menu a.on { background: #f0f0f0; }
.menu a.on svg { color: var(--accent); }
.menu svg { width: 16px; height: 14px; margin-right: 12px; }
.menu .caret { margin-left: auto; border-width: 5px 4px 0; color: #999; }
.menu h2 { height: 43px; padding: 22px 0 0 20px; color: #858585; font-size: 13px; }
.account { padding-top: 14px; height: 48px; }
.site .account { height: 81px; }
.admin { display: flex; align-items: center; padding-left: 18px; color: #858585; font-weight: 500; }
.admin svg { width: 12px; height: 13px; margin-right: 17px; }
.privacy { display: block; margin-top: 14px; padding-left: 17px; font-size: 12px; }
.fold { display: flex; align-items: flex-start; flex: 1; background: #ececec; color: #999; }
.fold svg { width: 9px; height: 13px; margin: 17px 0 0 166px; }

/* content */
.content { overflow: hidden; background: #fefefe; }
.card { background: #fff; border: 1px solid #ececec; border-bottom: 2px solid #e6e6e6; }
.card h2 { height: 39px; padding-left: 13px; font-size: 16px; line-height: 37px; white-space: nowrap; }
.note { display: flex; align-items: center; }
.note svg { width: 12px; height: 14px; margin: 0 10px 0 2px; }
.muted { color: #858585; }
.muted svg { color: #3f97c6; }
.saved { color: #959595; }

.site .head { height: 126px; padding-top: 24px; border-bottom: 1px solid #e6e6e6; }
.site .headline { display: flex; justify-content: space-between; align-items: flex-start; height: 27px; padding: 0 25px 0 24px; }
.site h1 { font-size: 20px; line-height: 27px; }
.site h1 em { color: var(--accent); }
.site .note { margin: 11px 24px 4px; }
.add-dashboard { height: 24px; padding: 0 8px; background: #fff; border: 1px solid #bbb; border-radius: 2px; font-size: 12px; line-height: 22px; }
.tabs { display: flex; margin-left: 8px; height: 40px; }
.tabs a { padding: 0 16px; line-height: 38px; color: var(--accent); border-bottom: 3px solid var(--accent); }
.tabs button { width: 44px; color: #999; }
.tabs svg { width: 12px; height: 12px; margin: -4px auto 0; }
.status { height: 189px; margin: 15px 24px; }
.rings { display: grid; grid-template-columns: repeat(4, 1fr); }
.ringbox { display: flex; gap: 10px; padding: 17px 0 0 33px; white-space: nowrap; }
.ring {
  display: flex;
  flex-direction: column;
  align-items: center;
  width: 105px;
  height: 105px;
  padding-top: 20px;
  border: 7px solid var(--accent);
  border-radius: 50%;
  font-size: 12px;
  line-height: 16px;
}
.ring b { font-size: 27px; line-height: 30px; font-weight: 400; }
.lines { display: flex; flex-direction: column; line-height: 24px; }
.lines a { display: flex; align-items: center; }
.lines svg { width: 9px; height: 9px; margin-right: 4px; }

.cards { display: grid; grid-template-columns: repeat(3, minmax(0, 1fr)); gap: 15px 21px; margin: 0 24px; }
.wide { grid-column: span 2; }
.cards .card { min-width: 0; }
.activity { display: flex; flex-direction: column; }
.activity ul { padding: 8px 11px 0 10px; }
.activity li { display: flex; height: 50px; padding: 4px 5px 0 0; border-bottom: 1px solid #ececec; line-height: 21px; }
.activity li:last-child { border: 0; }
.activity li > i { width: 30px; height: 30px; margin: 9px 15px 0 0; border-radius: 50%; background: var(--accent); color: #fff; font-size: 12px; line-height: 30px; text-align: center; }
.activity li div { flex: 1; }
.activity strong, .activity span { display: block; }
.activity small { color: #8795a0; font-size: 12px; }
.more { margin: auto 16px 15px auto; }
.worldmap, .citymap { position: relative; overflow: hidden; }
.google { font: 20px Lato, sans-serif; }
.halo, .place, .street, .credit { paint-order: stroke; stroke: #fff; stroke-width: 2px; }
.place { fill: #5b7684; font: 12px Roboto, "Noto Sans CJK TC", sans-serif; }
.place[text-anchor="end"] { font-size: 11px; }
.place .zh { font-size: 13px; }
.grave { fill: #1c8a2c; }
.street { fill: #6b6f73; font: 10px Roboto, sans-serif; }
.shield { fill: #4c4020; font: 10px Roboto, sans-serif; }
.river { fill: #4a86d0; font: 12px "Noto Sans CJK TC", sans-serif; }
.credit { fill: #333; stroke-width: 0; font: 12px Roboto, "Noto Sans CJK TC", sans-serif; }

/* map controls */
.maptype { position: absolute; left: 10px; top: 10px; display: flex; background: #fff; box-shadow: 0 1px 3px rgba(0, 0, 0, .3); border-radius: 2px; }
.maptype button { height: 33px; padding: 0 8px; font: 12px/33px Roboto, "Noto Sans CJK TC", sans-serif; color: #555; }
.maptype button.on { color: #000; font-weight: 500; }
.maptype button + button { border-left: 1px solid #e6e6e6; }
.mapright { position: absolute; right: 0; top: 5px; display: flex; flex-direction: column; align-items: flex-end; }
.manage { height: 24px; width: 89px; background: #fff; border: 1px solid #aaa; border-radius: 2px; box-shadow: 0 1px 2px rgba(0, 0, 0, .3); color: #000; font: 500 12px/22px Roboto, sans-serif; }
.full { display: grid; place-items: center; width: 25px; height: 25px; margin: 10px 14px 199px 0; background: #fff; }
.full svg { width: 16px; height: 16px; }
.pegman { display: grid; place-items: center; width: 28px; height: 28px; margin: 0 10px 10px 0; background: #fff; box-shadow: 0 1px 3px rgba(0, 0, 0, .3); border-radius: 2px; }
.pegman svg { width: 12px; height: 20px; }
.zoom { width: 28px; height: 55px; margin-right: 10px; padding: 0 4px; background: #fff; box-shadow: 0 1px 3px rgba(0, 0, 0, .3); border-radius: 2px; color: #666; }
.zoom button { display: grid; place-items: center; width: 20px; height: 27px; }
.zoom button + button { border-top: 1px solid #e0e0e0; }
.zoom svg { width: 11px; height: 11px; }

/* device page */
.device .head { display: flex; justify-content: space-between; height: 92px; margin-right: 3px; padding: 22px 20px 0 23px; background: #fff; box-shadow: 0 1px 3px rgba(0, 0, 0, .2); }
.device .headline { display: flex; align-items: center; height: 34px; }
.product { width: 35px; height: 34px; margin-right: 18px; }
.device h1 { font-size: 18px; line-height: 30px; }
.headline small { margin-left: 11px; font-size: 11px; }
.device .note { margin: 6px 3px; }
.actions { display: flex; align-items: center; height: 27px; margin-top: 33px; font-size: 12px; white-space: nowrap; }
.connected { margin-right: 7px; color: #5fa83c; }
.group { display: flex; height: 27px; border: 1px solid #d4d4d4; border-radius: 3px; overflow: hidden; }
.group button { padding: 0 11px; line-height: 25px; border-right: 1px solid #d4d4d4; background: #fff; }
.group .cog { display: flex; align-items: center; justify-content: center; gap: 4px; width: 62px; border: 0; background: #e3e3e3; }
.cog svg { width: 13px; height: 13px; }
.cog .down { width: 11px; height: 8px; margin-top: 4px; }
.health { display: flex; align-items: center; gap: 18px; height: 27px; margin-left: 20px; padding: 0 15px 0 13px; border: 1px solid #f0f0f0; color: #6aa84f; font-weight: 600; }
.health span { display: flex; align-items: center; gap: 4px; }
.health svg { width: 16px; height: 12px; }
.health .s-warn { width: 12px; height: 11px; }
.health .s-user { width: 11px; height: 13px; }

.panel { margin: 16px 24px 0; }
.panel header { display: flex; justify-content: space-between; height: 44px; border-bottom: 1px solid #ececec; }
.panel h2 { height: 43px; line-height: 45px; }
.panel header button { display: grid; place-items: center; width: 44px; border-left: 1px solid #ececec; color: #a5a5a5; }
.panel header svg { width: 13px; height: 9px; }
.halves { display: grid; grid-template-columns: repeat(2, minmax(0, 1fr)); gap: 31px; padding: 0 15px 0 16px; }
table { width: 100%; border-collapse: collapse; table-layout: fixed; }
th { width: 143px; padding: 0; text-align: left; font-weight: 400; white-space: nowrap; }
td { padding: 0; height: 24px; white-space: nowrap; }
.info { align-items: start; height: 429px; }
.info table { margin-top: 21px; }
.info .tall td { height: 26px; }
.citymap { margin-top: 16px; height: 380px; }
.ok { width: 14px; height: 14px; color: #5fa83c; }
.yes { width: 14px; height: 12px; color: #3a8dcb; }
.bar { position: relative; display: grid; height: 18px; background: #d9d9d9; font-size: 12px; line-height: 18px; text-align: center; }
.bar i, .bar span { grid-area: 1 / 1; }
.bar i { background: #7bd06f; }
.bar span { z-index: 1; }

.live { height: 260px; }
.live h2 { font-size: 13px; font-weight: 600; }
.live .halves { padding-top: 32px; }
.radio-head { display: flex; align-items: center; height: 24px; margin-bottom: 8px; color: #707070; white-space: nowrap; }
.radio-head h3 { display: flex; align-items: center; margin-right: auto; color: #3b3b3b; font-size: 13px; font-weight: 700; }
.radio-head h3 svg { width: 14px; height: 12px; margin-right: 6px; color: #6fae64; }
.radio-head span { display: flex; align-items: center; gap: 3px; margin-left: 13px; }
.radio-head span svg { width: 11px; height: 12px; }
.radio-head span:nth-child(2) svg { width: 14px; }
.radio td { height: 22px; }
.radio th { padding-right: 12px; text-align: right; }

/* note dialog */
.shade { position: absolute; inset: 0; background: rgba(67, 67, 67, .3); }
.dialog {
  position: absolute;
  left: 216px;
  top: 141px;
  width: 400px;
  height: 180px;
  padding: 14px 16px;
  border-radius: 3px;
  background: #fff;
  box-shadow: 0 4px 12px rgba(0, 0, 0, .25);
}
.device .dialog { left: 268px; top: 142px; }
.dialog h2 { display: flex; align-items: center; gap: 9px; height: 22px; margin-bottom: 4px; font-size: 13px; }
.dialog h2 b { color: var(--accent); font-weight: 700; }
.dialog h2 span { color: #8c8c8c; }
.dialog textarea {
  --x: 5px;
  --y: 9px;
  display: block;
  width: 100%;
  height: 96px;
  padding: 8px 7px;
  resize: none;
  border: 1px solid #4a98c4;
  border-radius: 2px;
  background: linear-gradient(#333, #333) var(--x) var(--y) / 1px 14px no-repeat #fff;
  color: #444;
  font-size: 13px;
  line-height: 16px;
  outline: 0;
}
.dialog textarea.caret-third { --x: 101px; --y: 41px; }
.dialog textarea.caret-first { --x: 131px; --y: 9px; }
.dialog textarea::placeholder { color: #9a9a9a; }
.foot { display: flex; justify-content: flex-end; gap: 8px; margin-top: 8px; font-size: 11px; }
.foot span { height: 14px; color: #8c8c8c; line-height: 14px; }
.foot button { width: 64px; height: 24px; border: 1px solid #d4d4d4; border-radius: 2px; background: #f7f7f7; line-height: 22px; }
.foot .save { background: var(--accent); border-color: var(--accent); color: #fff; }
.foot .save:disabled { background: var(--soft); border-color: var(--soft); }

.toast {
  position: absolute;
  right: 62px;
  top: 151px;
  display: flex;
  align-items: center;
  width: 320px;
  height: 49px;
  padding-left: 15px;
  border: 1px solid #b9d9ae;
  background: #dff0d8;
  color: #4d6b47;
  box-shadow: 0 1px 3px rgba(0, 0, 0, .15);
}
.toast svg { width: 14px; height: 14px; margin-right: 10px; }
.toast strong { font-weight: 600; }
.toast button { margin: 0 14px 10px auto; color: #7c9275; font-size: 16px; font-weight: 300; }
```
